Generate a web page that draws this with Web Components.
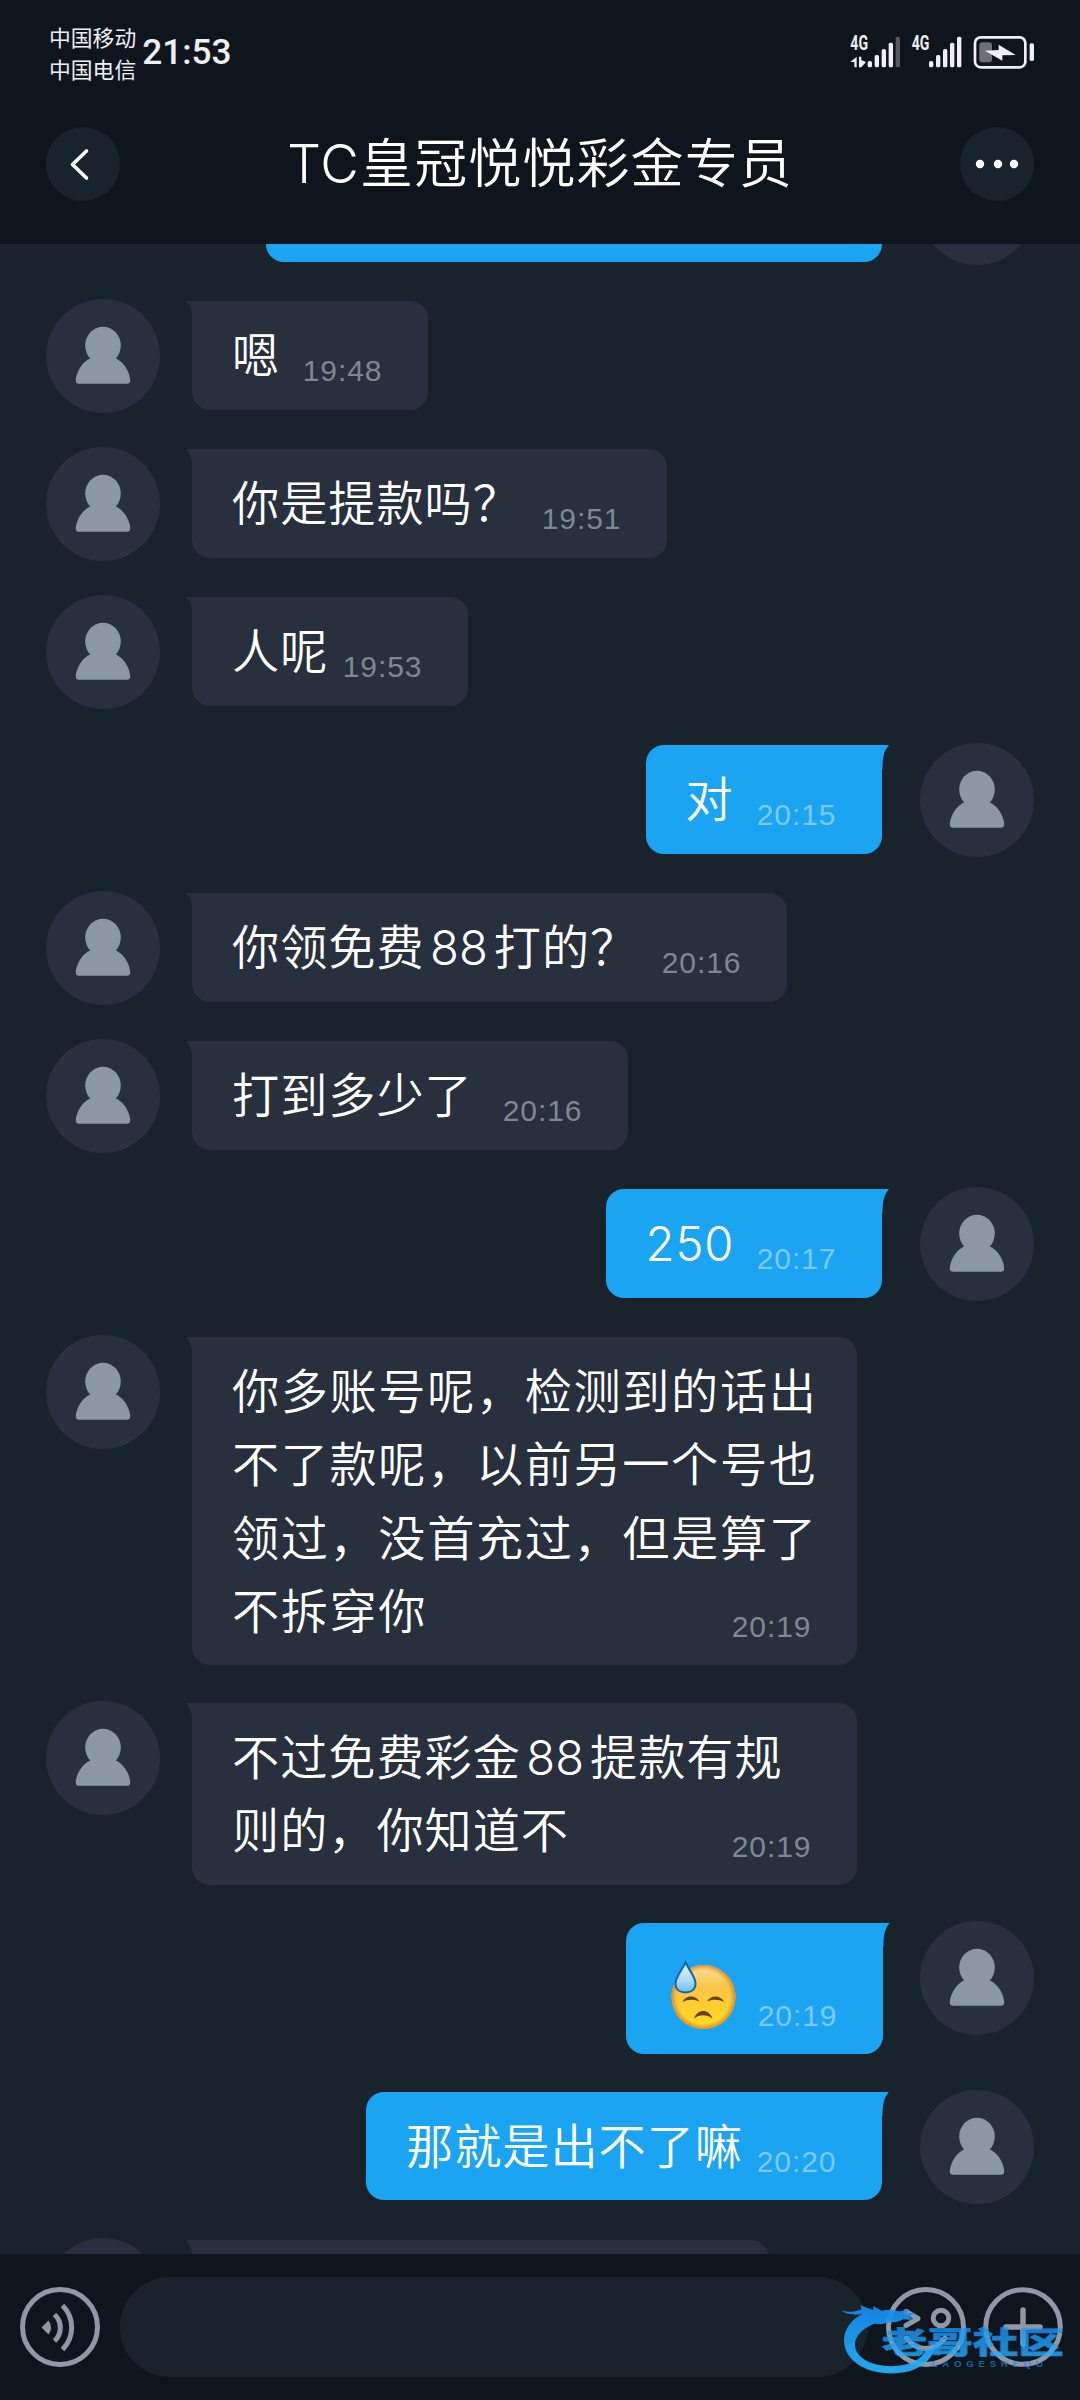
<!DOCTYPE html>
<html lang="zh-CN">
<head>
<meta charset="utf-8">
<title>Chat</title>
<style>
html,body{margin:0;padding:0;background:#19232b}
body{width:1080px;height:2400px;overflow:hidden;font-family:Inter,"Noto Sans CJK SC",sans-serif}
</style>
</head>
<body>
<chat-screen>
  <status-bar slot="top"></status-bar>
  <title-bar slot="top"><span>TC</span>皇冠悦悦彩金专员</title-bar>
  <chat-message side="out" w="616" time=""></chat-message>
  <chat-message w="236" time="19:48">嗯</chat-message>
  <chat-message w="475" time="19:51">你是提款吗？</chat-message>
  <chat-message w="276" time="19:53">人呢</chat-message>
  <chat-message side="out" w="236.5" time="20:15">对</chat-message>
  <chat-message w="595" time="20:16">你领免费<span>88</span>打的？</chat-message>
  <chat-message w="436" time="20:16">打到多少了</chat-message>
  <chat-message side="out" w="276.5" time="20:17"><b>250</b></chat-message>
  <chat-message wide w="665" time="20:19">你多账号呢，检测到的话出<br>不了款呢，以前另一个号也<br>领过，没首充过，但是算了<br>不拆穿你</chat-message>
  <chat-message w="665" time="20:19">不过免费彩金<span>88</span>提款有规<br>则的，你知道不</chat-message>
  <chat-message side="out" near w="257" time="20:19"><sweat-emoji></sweat-emoji></chat-message>
  <chat-message side="out" w="516" time="20:20">那就是出不了嘛</chat-message>
  <chat-message w="577" time=""></chat-message>
  <input-bar slot="bottom"></input-bar>
</chat-screen>
<script>
const define = (name, html, after) => {
  const t = document.createElement('template');
  t.innerHTML = html;
  customElements.define(name, class extends HTMLElement {
    constructor() {
      super();
      this.attachShadow({mode: 'open'}).append(t.content.cloneNode(true));
    }
    connectedCallback() { if (after) after(this, this.shadowRoot); }
  });
};

define('chat-screen', `
<style>
:host{display:flex;flex-direction:column;width:1080px;height:2400px;background:#19232b;color:#fff}
header{height:244px;flex:none;background:#0f151d;display:flex;flex-direction:column}
main{flex:1;min-height:0;overflow:hidden}
.list{display:flex;flex-direction:column;gap:34px;margin-top:-93px}
footer{flex:none}
</style>
<header><slot name="top"></slot></header>
<main><div class="list"><slot></slot></div></main>
<footer><slot name="bottom"></slot></footer>`);

define('status-bar', `
<style>
:host{display:flex;height:106px;box-sizing:border-box;padding:21px 40px 0 49px;align-items:flex-start;color:#eef0f5}
.net{font:400 21.8px/32px "Noto Sans CJK SC",sans-serif;white-space:nowrap}
.clock{font:500 35.2px/63px Roboto,sans-serif;margin-left:6px}
svg{margin:9px 0 0 auto;display:block}
</style>
<div class="net"><div>中国移动</div><div>中国电信</div></div>
<div class="clock">21:53</div>
<svg width="200" height="50" viewBox="0 0 600 150" fill="#eef0f5">
  <g font-family="Roboto,sans-serif" font-weight="700" font-size="58">
    <text x="31" y="61" textLength="53" lengthAdjust="spacingAndGlyphs">4G</text>
    <text x="215" y="61" textLength="53" lengthAdjust="spacingAndGlyphs">4G</text>
  </g>
  <path d="M31 96 L50 80 V112 H43 V96Z M57 80 H64 V91 L78 96 L64 112 H57Z"/>
  <rect x="83" y="93" width="13" height="19" rx="5"/><rect x="104" y="75" width="13" height="37" rx="5"/><rect x="125" y="57" width="13" height="55" rx="5"/><rect x="146" y="38" width="13" height="74" rx="5"/><rect x="167" y="20" width="13" height="92" rx="5" fill="#55595f"/>
  <rect x="267" y="93" width="13" height="19" rx="5"/><rect x="288" y="75" width="13" height="37" rx="5"/><rect x="309" y="57" width="13" height="55" rx="5"/><rect x="330" y="38" width="13" height="74" rx="5"/><rect x="351" y="20" width="13" height="92" rx="5"/>
  <rect x="405" y="22" width="151" height="90" rx="17" fill="none" stroke="#eef0f5" stroke-width="8"/>
  <rect x="418" y="37" width="38" height="60" rx="9" fill="#6d7076"/>
  <rect x="569" y="40" width="13" height="53" rx="5"/>
  <path d="M435 62 L476 60 L476 44 L527 75 L487 76 L487 92Z"/>
</svg>`);

define('title-bar', `
<style>
:host{display:flex;align-items:center;justify-content:space-between;height:116px;padding:0 46px}
i{width:74px;height:74px;border-radius:50%;background:#19232b;display:block}
svg{display:block}
h1{margin:0;font-weight:350;font-size:53px;line-height:75px;letter-spacing:1.100px;white-space:nowrap;text-autospace:no-autospace}
::slotted(span){font-weight:300}
</style>
<i><svg width="74" height="74" fill="none" stroke="#fff" stroke-width="3.6" stroke-linecap="round" stroke-linejoin="round"><path d="M40.500 24L26.500 37.500L40.500 51"/></svg></i>
<h1><slot></slot></h1>
<i><svg width="74" height="74" fill="#fff"><circle cx="20" cy="37" r="4.200"/><circle cx="38" cy="37" r="4.200"/><circle cx="54" cy="37" r="4.200"/></svg></i>`);

define('user-avatar', `
<style>:host{display:block;width:114px;height:114px;border-radius:50%;background:#27303c;flex:none}svg{display:block}</style>
<svg width="114" height="114" fill="#8c97a4"><ellipse cx="57" cy="46.500" rx="17.800" ry="18.800"/><path d="M33 84.800Q29.500 84.800 29.800 80.500C31 71 37 62.500 45 59H69C77 62.500 83 71 84.200 80.500Q84.500 84.800 81 84.800Z"/></svg>`);

define('chat-message', `
<style>
:host{display:flex;align-items:flex-start;gap:32px;padding:0 46px}
:host([side=out]){flex-direction:row-reverse;gap:38px}
:host([near]){gap:37px}
.bubble{position:relative;display:grid;grid-template-columns:minmax(0,1fr);box-sizing:border-box;width:var(--w);min-height:108.600px;margin:2px 0 1.800px;padding:18.200px 46px 17.200px 40px;border-radius:0 18px 18px 18px;background:#27303c}
:host([side=out]) .bubble{background:#1ba4f2;border-radius:18px 0 18px 18px}
.bubble::before{content:"";position:absolute;left:-6px;top:0;width:20px;height:24px;background:inherit;clip-path:path("M0 0H20V24H6.500C6.500 12 5 6 0 0Z")}
:host([side=out]) .bubble::before{left:auto;right:-6.500px;transform:scaleX(-1)}
.text{grid-area:1/1;font-weight:350;font-size:47.200px;line-height:73.200px;letter-spacing:.950px;white-space:nowrap;text-autospace:no-autospace}
:host([wide]) .text{letter-spacing:1.600px}
.time{grid-area:1/1;align-self:end;justify-self:end;font-family:"Liberation Sans",sans-serif;font-weight:400;font-size:30px;line-height:36px;letter-spacing:.950px;color:#7f8792;margin:0 -.500px 3px 0}
:host([side=out]) .time{color:#7ccaf8}
::slotted(span){margin:0 6px 0 5.500px;font-weight:300;letter-spacing:0}
::slotted(b){font-weight:300}
</style>
<user-avatar></user-avatar>
<div class="bubble"><div class="text"><slot></slot></div><div class="time"></div></div>`,
(el, root) => {
  root.querySelector('.bubble').style.setProperty('--w', el.getAttribute('w') + 'px');
  root.querySelector('.time').textContent = el.getAttribute('time');
});

define('sweat-emoji', `
<style>:host{display:block;height:96px;width:80px}svg{display:block}</style>
<svg width="80" height="96" viewBox="0 0 80 96">
  <defs>
    <linearGradient id="f" x1="0" y1="0" x2="0" y2="1"><stop offset="0" stop-color="#fde2a0"/><stop offset=".35" stop-color="#fbc546"/><stop offset=".75" stop-color="#fdd22b"/><stop offset="1" stop-color="#fde021"/></linearGradient>
    <radialGradient id="e"><stop offset=".82" stop-color="#e8952a" stop-opacity="0"/><stop offset="1" stop-color="#e28a20"/></radialGradient>
    <linearGradient id="d" x1="0" y1="0" x2="0" y2="1"><stop offset="0" stop-color="#e8f7ff"/><stop offset=".6" stop-color="#a9dbfa"/><stop offset="1" stop-color="#6fbdf0"/></linearGradient>
  </defs>
  <g transform="translate(-.5 -.5)">
  <circle cx="38" cy="56.500" r="32" fill="url(#f)"/><circle cx="38" cy="56.500" r="32" fill="url(#e)"/>
  <g fill="#6a3f0c"><path d="M17 61.500C20 54.500 30 54 34 61C29 58.500 22 58.500 17 61.500Z"/><path d="M41.500 61C45.500 54 55.500 54.500 58.500 61.500C53.500 58.500 46.500 58.500 41.500 61Z"/><path d="M28.500 78C32 68 43.500 68 47 78C42 73.500 33.500 73.500 28.500 78Z"/></g>
  <path d="M20 22C23 29 30 36 30 43C30 49 25.500 52 20 52C14.500 52 10 49 10 43C10 36 17 29 20 22Z" fill="url(#d)" stroke="#1767a8" stroke-width="2"/>
  </g>
</svg>`);

define('input-bar', `
<style>
:host{display:flex;position:relative;box-sizing:border-box;height:146px;padding:23px 17px 0 20px;background:#0f151d;align-items:flex-start}
.field{width:748px;height:100px;border-radius:50px;background:#19232b;margin:0 18px 0 20px}
.ic{display:block;margin-top:10px;flex:none}
.plus{margin-left:17px}
.mark{position:absolute;left:835px;top:16px}
</style>
<svg class="ic" width="80" height="80" fill="none" stroke="#8f98a4" stroke-width="5"><circle cx="40" cy="40" r="37.500"/><path d="M34.500 27.500A18 18 0 0 1 34.500 54"/><path d="M42.500 18.500A31 31 0 0 1 42.500 62.500"/><path d="M21.500 40.500L28.500 33.500Q33.500 40.500 28.500 47.500Z" fill="#8f98a4" stroke="none"/></svg>
<div class="field"></div>
<svg class="ic" width="80" height="80" fill="none" stroke="#8f98a4" stroke-width="5" stroke-linecap="round" stroke-linejoin="round"><circle cx="40" cy="40" r="37.500"/><path d="M20 24.500L32 31.500L20 38.500"/><circle cx="55" cy="31" r="7.800"/><path d="M20.500 51Q28 61.500 39 61.500Q51 61.500 59 51"/></svg>
<svg class="ic plus" width="80" height="80" fill="none" stroke="#8f98a4" stroke-width="5.500" stroke-linecap="round"><circle cx="40" cy="40" r="37.300" stroke-width="5"/><path d="M40 23V57M23 40H57"/></svg>
<svg class="mark" width="240" height="120" viewBox="0 0 720 360">
  <defs><linearGradient id="g" x1="0" y1="0" x2="0" y2="1"><stop offset="0" stop-color="#168af0"/><stop offset="1" stop-color="#28b4ff"/></linearGradient></defs>
  <path fill="url(#g)" opacity=".92" d="M20 121C45 130 65 124 80 118L76 106C92 112 104 118 116 119L114 108L140 122C165 116 180 123 196 124L222 118L214 130L240 128L222 140L236 150L205 148C190 158 170 156 150 160C135 166 128 160 116 162C80 178 58 200 60 228C64 268 120 292 182 288C230 284 262 266 272 240L304 232C288 268 258 306 182 310C92 314 28 270 27 212C27 175 52 146 84 131C60 136 32 134 20 121Z"/>
  <g opacity=".8"><text x="140" y="250" font-family="Noto Sans CJK SC,sans-serif" font-weight="900" font-size="90" fill="url(#g)" stroke="#1c98f5" stroke-width="2" textLength="546" lengthAdjust="spacingAndGlyphs">老哥社区</text></g>
  <text x="290" y="290" font-family="Liberation Sans,sans-serif" font-weight="700" font-size="29" fill="#1b86d8" opacity=".7" textLength="334">LAOGESHEQU</text>
</svg>`);
</script>
</body>
</html>
